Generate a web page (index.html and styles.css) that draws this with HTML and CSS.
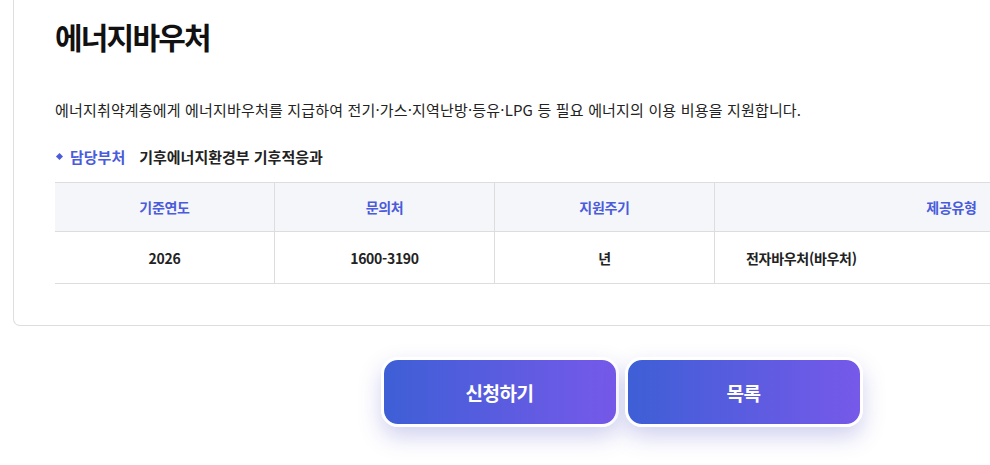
FILE: index.html
```html
<!DOCTYPE html>
<html lang="ko">
<head>
<meta charset="utf-8">
<title>에너지바우처</title>
<link rel="stylesheet" href="styles.css">
</head>
<body>
<div class="page">
  <section class="card">
    <h1 class="title">에너지바우처</h1>
    <p class="desc">에너지취약계층에게 에너지바우처를 지급하여 전기·가스·지역난방·등유·LPG 등 필요 에너지의 이용 비용을 지원합니다.</p>
    <div class="dept">
      <span class="bullet"></span>
      <span class="dept-label">담당부처</span>
      <span class="dept-value">기후에너지환경부 기후적응과</span>
    </div>
    <table class="info">
      <thead>
        <tr>
          <th class="c1">기준연도</th>
          <th class="c2">문의처</th>
          <th class="c3">지원주기</th>
          <th class="c4">제공유형</th>
        </tr>
      </thead>
      <tbody>
        <tr>
          <td>2026</td>
          <td>1600-3190</td>
          <td>년</td>
          <td class="left">전자바우처(바우처)</td>
        </tr>
      </tbody>
    </table>
  </section>
  <div class="actions">
    <a class="btn" href="#">신청하기</a>
    <a class="btn" href="#">목록</a>
  </div>
</div>
</body>
</html>
```

FILE: styles.css
```css
html {
  overflow: hidden;
}
html, body {
  margin: 0;
  padding: 0;
  background: #ffffff;
}
body {
  font-family: "Noto Sans CJK KR", "Noto Sans", sans-serif;
  color: #222222;
}
.page {
  width: 1217px;
  margin-left: 13px;
  padding-bottom: 40px;
}
.card {
  border: 1px solid #dedede;
  border-top: 0;
  border-radius: 0 0 7px 7px;
  padding: 14px 41px 41px;
  box-sizing: border-box;
}
.title {
  margin: 0;
  font-size: 30px;
  font-weight: 700;
  letter-spacing: -1.8px;
  line-height: 44px;
  color: #111111;
}
.desc {
  margin: 40px 0 0;
  font-size: 15px;
  line-height: 24px;
  letter-spacing: 0.17px;
  color: #222222;
}
.dept {
  display: flex;
  align-items: center;
  margin-top: 22px;
  height: 24px;
  font-size: 15px;
  font-weight: 700;
  letter-spacing: 0;
}
.bullet {
  width: 5px;
  height: 5px;
  background: #4a5bdc;
  transform: rotate(45deg);
  margin: 0 8px 0 2px;
}
.dept-label {
  color: #4a5bdc;
  margin-right: 14px;
}
.dept-value {
  color: #222222;
}
.info {
  width: 100%;
  margin-top: 14px;
  border-collapse: collapse;
  table-layout: fixed;
  font-size: 14px;
  letter-spacing: -0.3px;
}
.info th, .info td {
  border-left: 1px solid #dddddd;
  text-align: center;
}
.info th:first-child, .info td:first-child {
  border-left: 0;
}
.info thead tr {
  border-top: 1px solid #dddddd;
  border-bottom: 1px solid #dddddd;
}
.info tbody tr {
  border-bottom: 1px solid #dddddd;
}
.info th {
  height: 48px;
  padding: 0;
  background: #f5f6fa;
  color: #4a5bdc;
  font-weight: 700;
}
.info td {
  height: 51px;
  padding: 0;
  font-weight: 700;
  color: #222222;
}
.info td.left {
  text-align: left;
  padding-left: 31px;
}
.c1, .c2, .c3 {
  width: 219px;
}
.actions {
  display: flex;
  justify-content: center;
  gap: 6px;
  margin-top: 31px;
}
.btn {
  display: flex;
  align-items: center;
  justify-content: center;
  width: 238px;
  height: 70px;
  box-sizing: border-box;
  border: 3px solid #ffffff;
  border-radius: 17px;
  background: linear-gradient(90deg, #3e5fd6 0%, #7659e9 100%);
  color: #ffffff;
  font-size: 19px;
  font-weight: 700;
  letter-spacing: -0.5px;
  text-decoration: none;
  box-shadow: 0 10px 22px rgba(90, 90, 200, 0.28);
}
```
